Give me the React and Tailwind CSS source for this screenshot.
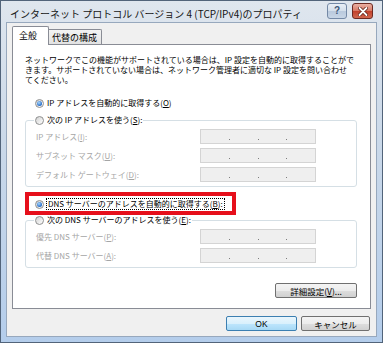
import React from "react";

const Radio = ({ checked }) => (
  <span className="w-[9px] h-[9px] rounded-full border border-[#8e8f8f] bg-[linear-gradient(135deg,#d2d2d2,#ffffff)] flex items-center justify-center shrink-0">
    {checked && (
      <span className="w-[5px] h-[5px] rounded-full bg-[radial-gradient(circle_at_40%_35%,#a8d8ff,#1b62c2_75%)]" />
    )}
  </span>
);

const IpBox = () => (
  <div className="w-[116px] h-[15px] border border-[#d4d4d4] bg-[#efefef] flex items-end pb-[3px]">
    <span className="flex-1" />
    <span className="w-px h-px bg-[#7d7d7d]" />
    <span className="flex-1" />
    <span className="w-px h-px bg-[#7d7d7d]" />
    <span className="flex-1" />
    <span className="w-px h-px bg-[#7d7d7d]" />
    <span className="flex-1" />
  </div>
);

const Row = ({ children }) => (
  <div className="flex items-center h-[15px]">
    <span className="w-[164px] text-[#a5a5a5] leading-[10px] whitespace-nowrap">{children}</span>
    <IpBox />
  </div>
);

const btn =
  "h-[15px] rounded-[2px] border flex items-center justify-center text-[8.5px] leading-[10px] text-black";
const btnGray =
  "border-[#707070] bg-[linear-gradient(to_bottom,#f4f4f4_0%,#ececec_50%,#dedede_50%,#d0d0d0_100%)]";
const btnBlue =
  "border-[#3c7fb1] bg-[linear-gradient(to_bottom,#eaf6fd_0%,#d9f0fc_50%,#bee6fd_50%,#a7d9f5_100%)]";

export default function App() {
  return (
    <div className="w-[383px] h-[343px] border border-[#52647a] bg-[linear-gradient(to_bottom,#dfe6ee_0%,#cbd9e9_40%,#b4cdeb_100%)] flex flex-col font-['Noto_Sans_CJK_JP',sans-serif] text-[8px] text-black">
      {/* title bar */}
      <div className="h-[21px] flex items-start shrink-0">
        <span className="pl-[9px] pt-[7px] text-[10px] leading-[12px] text-[#151515] whitespace-nowrap">
          インターネット プロトコル バージョン 4 (TCP/IPv4)のプロパティ
        </span>
        <span className="flex-1" />
        <span className="mt-[2px] w-[20px] h-[16px] rounded-[3px] border border-[#7489a6] bg-[linear-gradient(to_bottom,#e9eff6_0%,#d3deeb_50%,#b9c9dd_51%,#c8d6e6_100%)] flex items-center justify-center font-['Liberation_Sans',sans-serif] font-bold text-[10px] leading-[10px] text-[#3c5678]">
          ?
        </span>
        <span className="ml-[5px] mr-[9px] mt-[2px] w-[21px] h-[16px] rounded-[3px] border border-[#6d2a22] bg-[linear-gradient(to_bottom,#eab1a4_0%,#d97a66_48%,#c2412c_52%,#d0674f_100%)] flex items-center justify-center">
          <svg width="10" height="9" viewBox="0 0 10 9">
            <path d="M1.5 1 L8.5 8 M8.5 1 L1.5 8" stroke="#5a1d14" strokeWidth="3.4" strokeLinecap="round" />
            <path d="M1.5 1 L8.5 8 M8.5 1 L1.5 8" stroke="#ffffff" strokeWidth="1.8" strokeLinecap="round" />
          </svg>
        </span>
      </div>

      {/* client area */}
      <div className="flex-1 mx-[5px] mb-[5px] border border-[#97a8bd] bg-[#f0f0f0] flex flex-col pt-[3px]">
        {/* tabs */}
        <div className="flex items-end h-[18px] ml-[5px] shrink-0">
          <div className="relative z-10 w-[37px] h-[19px] -mb-px bg-white border-t border-x border-[#898c95] rounded-t-[2px] pl-[6px] pt-[3px] text-[9px] leading-[11px]">
            全般
          </div>
          <div className="-ml-px w-[54px] h-[15px] border-t border-r border-[#898c95] rounded-tr-[2px] bg-[linear-gradient(to_bottom,#f3f3f3,#e2e2e2)] flex items-center justify-center text-[9px] leading-[11px]">
            代替の構成
          </div>
        </div>

        {/* panel */}
        <div className="mx-[5px] h-[265px] shrink-0 border border-[#898c95] bg-white pl-[12px] pr-[13px] pt-[10px] flex flex-col">
          <div className="leading-[10px] whitespace-nowrap">
            <div>ネットワークでこの機能がサポートされている場合は、IP 設定を自動的に取得することがで</div>
            <div>きます。サポートされていない場合は、ネットワーク管理者に適切な IP 設定を問い合わせ</div>
            <div>てください。</div>
          </div>

          <div className="mt-[13px] h-[10px] pl-[10px] flex items-center gap-[3px] leading-[10px] whitespace-nowrap">
            <Radio checked />
            <span>
              IP アドレスを自動的に取得する(<span className="underline">O</span>)
            </span>
          </div>

          <fieldset className="mt-[7px] border border-[#d5dfe5] rounded-[3px] pl-[10px] pt-[4px] pb-[4px]">
            <legend className="-ml-[2px] px-[1px] h-[10px] flex items-center gap-[3px] leading-[10px] whitespace-nowrap">
              <Radio />
              <span>
                次の IP アドレスを使う(<span className="underline">S</span>):
              </span>
            </legend>
            <div className="flex flex-col gap-[4px]">
              <Row>
                IP アドレス(<span className="underline">I</span>):
              </Row>
              <Row>
                サブネット マスク(<span className="underline">U</span>):
              </Row>
              <Row>
                デフォルト ゲートウェイ(<span className="underline">D</span>):
              </Row>
            </div>
          </fieldset>

          <div className="relative mt-[12px] h-[10px] pl-[10px] flex items-center gap-[2px] leading-[10px] whitespace-nowrap">
            <Radio checked />
            <span className="border border-dotted border-black px-[1px] leading-[10px]">
              DNS サーバーのアドレスを自動的に取得する(<span className="underline">B</span>):
            </span>
            <span className="absolute left-0 top-[-7px] w-[211px] h-[23px] border-4 border-[#e60f1b] z-10 pointer-events-none" />
          </div>

          <fieldset className="mt-[6px] border border-[#d5dfe5] rounded-[3px] pl-[10px] pt-[4px] pb-[4px]">
            <legend className="-ml-[2px] px-[1px] h-[10px] flex items-center gap-[3px] leading-[10px] whitespace-nowrap">
              <Radio />
              <span>
                次の DNS サーバーのアドレスを使う(<span className="underline">E</span>):
              </span>
            </legend>
            <div className="flex flex-col gap-[4px]">
              <Row>
                優先 DNS サーバー(<span className="underline">P</span>):
              </Row>
              <Row>
                代替 DNS サーバー(<span className="underline">A</span>):
              </Row>
            </div>
          </fieldset>

          <div className="mt-[15px] flex justify-end">
            <div className={`${btn} ${btnGray} w-[82px]`}>
              詳細設定(<span className="underline">V</span>)...
            </div>
          </div>
        </div>

        {/* bottom buttons */}
        <div className="mt-[7px] mr-[6px] flex justify-end gap-[4px] shrink-0">
          <div className={`${btn} ${btnBlue} w-[71px] font-['Liberation_Sans',sans-serif]`}>OK</div>
          <div className={`${btn} ${btnGray} w-[69px]`}>キャンセル</div>
        </div>
      </div>
    </div>
  );
}
